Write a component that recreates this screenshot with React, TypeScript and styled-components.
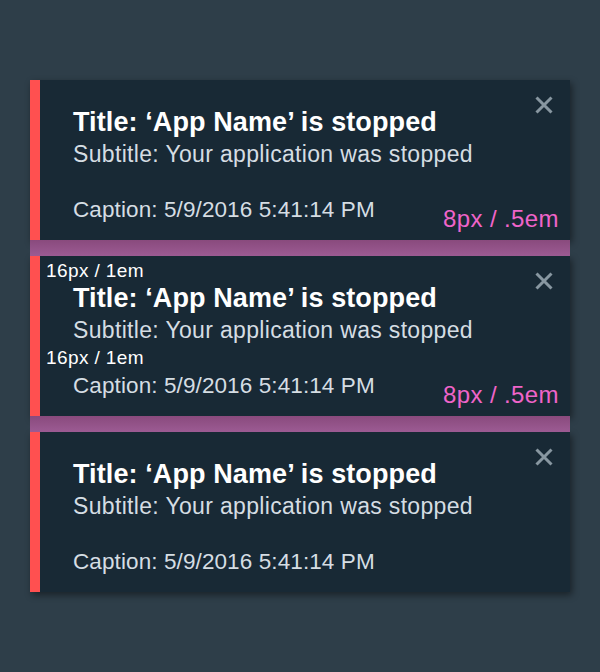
import React from "react";
import styled, { createGlobalStyle } from "styled-components";

const Global = createGlobalStyle`
  html, body { margin: 0; padding: 0; }
  body {
    background: #2e3e49;
    font-family: "Liberation Sans", Arial, Helvetica, sans-serif;
  }
`;

const Page = styled.div`
  width: 600px;
  height: 672px;
  box-sizing: border-box;
  padding: 80px 30px 0 30px;
  background: #2e3e49;
`;

const Stack = styled.div`
  display: flex;
  flex-direction: column;
  width: 540px;
`;

const Card = styled.div`
  position: relative;
  display: flex;
  height: 160px;
  background: #182935;
  box-shadow: 2px 3px 7px rgba(0, 0, 0, 0.45);
`;

const Stripe = styled.div`
  width: 10px;
  flex: none;
  background: #ff5050;
`;

const Body = styled.div`
  flex: 1;
  display: flex;
  flex-direction: column;
  padding: 27px 60px 15px 33px;
`;

const Title = styled.div`
  font-size: 27px;
  line-height: 30px;
  font-weight: 700;
  color: #ffffff;
  letter-spacing: 0.1px;
  white-space: nowrap;
`;

const Subtitle = styled.div`
  margin-top: 2px;
  font-size: 23px;
  line-height: 30px;
  color: #d5dde3;
  letter-spacing: 0.33px;
  white-space: nowrap;
`;

const Caption = styled.div`
  margin-top: 26px;
  font-size: 22.5px;
  line-height: 30px;
  color: #d5dde3;
  letter-spacing: 0.1px;
  white-space: nowrap;
`;

const Gap = styled.div`
  height: 16px;
  flex: none;
  position: relative;
  z-index: 1;
  background: linear-gradient(#894a7d, #9c5b93);
`;

const Close = styled.button`
  position: absolute;
  top: 16px;
  right: 17px;
  width: 18px;
  height: 18px;
  padding: 0;
  border: 0;
  background: none;
  display: flex;
  cursor: pointer;
`;

const EmLabel = styled.span<{ $top: number }>`
  position: absolute;
  left: 16px;
  top: ${(p) => p.$top}px;
  font-size: 19px;
  line-height: 20px;
  color: #ffffff;
  letter-spacing: 0.4px;
  white-space: nowrap;
`;

const PadLabel = styled.span`
  position: absolute;
  right: 11px;
  bottom: 8px;
  font-size: 24px;
  line-height: 26px;
  color: #ef64c9;
  letter-spacing: 0.4px;
  white-space: nowrap;
`;

const CloseIcon = () => (
  <svg width="18" height="18" viewBox="0 0 18 18">
    <path
      d="M1.5 1.5 L16.5 16.5 M16.5 1.5 L1.5 16.5"
      stroke="#8897a1"
      strokeWidth="3"
      strokeLinecap="butt"
      fill="none"
    />
  </svg>
);

type ToastProps = { padLabel?: boolean; emLabels?: boolean };

const Toast = ({ padLabel, emLabels }: ToastProps) => (
  <Card>
    <Stripe />
    <Body>
      <Title>Title: ‘App Name’ is stopped</Title>
      <Subtitle>Subtitle: Your application was stopped</Subtitle>
      <Caption>Caption: 5/9/2016 5:41:14 PM</Caption>
    </Body>
    <Close aria-label="Close">
      <CloseIcon />
    </Close>
    {emLabels && (
      <>
        <EmLabel $top={5}>16px / 1em</EmLabel>
        <EmLabel $top={92}>16px / 1em</EmLabel>
      </>
    )}
    {padLabel && <PadLabel>8px / .5em</PadLabel>}
  </Card>
);

export default function App() {
  return (
    <>
      <Global />
      <Page>
        <Stack>
          <Toast padLabel />
          <Gap />
          <Toast padLabel emLabels />
          <Gap />
          <Toast />
        </Stack>
      </Page>
    </>
  );
}
